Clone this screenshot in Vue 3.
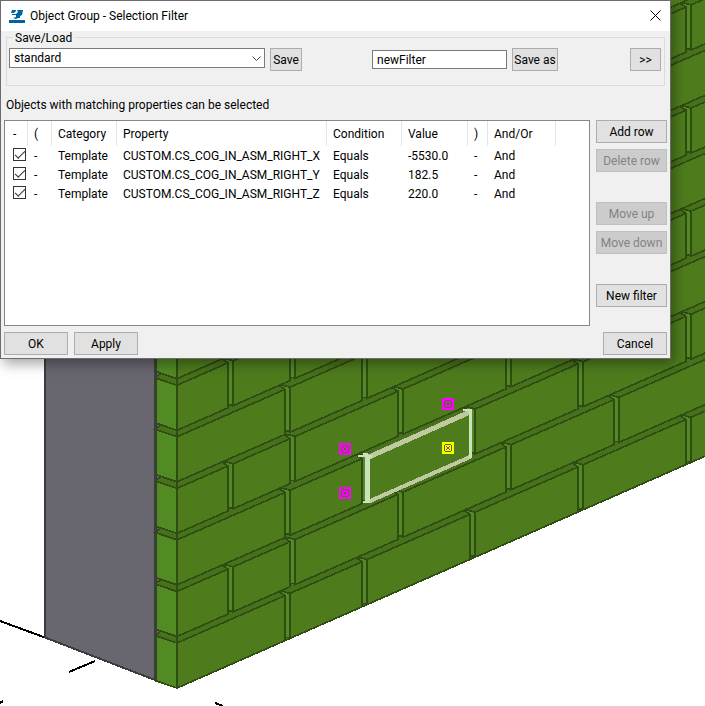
<script setup>
import { ref } from 'vue'

const preset = ref('standard')
const newName = ref('newFilter')
const rows = ref([
  { id: 'X', on: true, value: '-5530.0' },
  { id: 'Y', on: true, value: '182.5' },
  { id: 'Z', on: true, value: '220.0' },
])

/* Brick wall geometry: courses rise by PITCH, edges rise by SLOPE per pixel. */
const CORNER = 177
const SLOPE = 0.439
const PITCH = 51.55
const HEIGHT = 45
const evenBricks = [[177, 285], [290, 362], [367, 470], [475, 578], [583, 686], [691, 794]]
const oddBricks = [[177, 228], [233, 290], [295, 398], [403, 506], [511, 614], [619, 722]]

const base = (course, x) => 688 - course * PITCH - (x - CORNER) * SLOPE
const pts = (list) => list.map(([x, y]) => `${x},${y.toFixed(1)}`).join(' ')

const bricks = []
const joints = []
const sides = []
for (let c = 0; c < 14; c++) {
  const set = c % 2 ? oddBricks : evenBricks
  set.forEach(([a, b], i) => {
    bricks.push(pts([[a, base(c, a)], [a, base(c, a) - HEIGHT], [b, base(c, b) - HEIGHT], [b, base(c, b)]]))
    if (i > 0) {
      const l = a - 5
      const top = base(c, a) - HEIGHT
      joints.push({
        strip: pts([[l, base(c, a) - 1], [l, top + 2], [l - 5, top - 1], [l - 2, top - 2], [a, top], [a, base(c, a) - 1]]),
      })
    }
  })
  const y = 688 - c * PITCH
  sides.push({
    face: pts([[155, y - 7.5], [155, y - 52.5], [177, y - 45], [177, y]]),
    ledge: pts([[155, y - 52.5], [161, y - 57], [177, y - 51.5], [177, y - 45]]),
    gap: pts([[155, y - 59], [162, y - 56.5], [155, y - 52.5]]),
  })
}
const wall = pts([[177, 688], [177, -80], [720, -300], [720, base(0, 720)]])
const markers = [
  { x: 442, y: 398, color: '#ff00ff' },
  { x: 339, y: 443, color: '#ff00ff' },
  { x: 339, y: 487, color: '#ff00ff' },
  { x: 442, y: 442, color: '#ffff00' },
]
</script>

<template>
  <main class="viewport">
    <svg class="scene" viewBox="0 0 705 706" preserveAspectRatio="xMinYMin slice" aria-hidden="true">
      <g class="axes">
        <path d="M0 621L45 637.500M69 672L95 661M0 703L3 701M215 703L223 706" />
      </g>
      <polygon class="column" points="45,300 155,300 155,680 45,637.500" />
      <polygon class="ledge" :points="wall" />
      <g v-for="(s, i) in sides" :key="'s' + i">
        <polygon class="gap" :points="s.gap" />
        <polygon class="ledge" :points="s.ledge" />
        <polygon class="side" :points="s.face" />
      </g>
      <polygon v-for="(b, i) in bricks" :key="'b' + i" class="brick" :points="b" />
      <polygon v-for="(j, i) in joints" :key="'j' + i" class="side" :points="j.strip" />
      <path class="column-edge" d="M155.500 300V680" />
      <g class="picked">
        <path class="soft" stroke-width="5" d="M369 457L470 412" />
        <path class="soft" stroke-width="4" d="M369 501.500L470 457" />
        <path class="bright" stroke-width="3" d="M470.500 410V458" />
        <path class="bright" stroke-width="5" d="M367 455V503" />
        <path class="bright" stroke-width="2" d="M358 456L372 456M463 410L472 410M363 454L368 454M363 502L369 502" />
      </g>
      <g v-for="(m, i) in markers" :key="'m' + i" :transform="`translate(${m.x} ${m.y})`">
        <rect width="12" height="12" :fill="m.color" />
        <path class="marker-cut" d="M3 2h6v1h-6zM3 9h6v1h-6zM2 3h1v6h-1zM9 3h1v6h-1zM4 4h1v1h-1zM7 4h1v1h-1zM5 5h2v2h-2zM4 7h1v1h-1zM7 7h1v1h-1z" />
      </g>
    </svg>

    <form class="dialog" @submit.prevent>
      <header class="titlebar">
        <svg class="logo" viewBox="0 0 16 14" aria-hidden="true">
          <path fill="#0063a3" d="M0 11h16v3H0zM3 1h4v1L5 4H2zM8 1h6l-1 5-2 1v2H9l-2 1-3-1 3-1V6H3V5h4l2-2z" />
        </svg>
        <h1>Object Group - Selection Filter</h1>
        <button class="close" type="button" aria-label="Close">
          <svg viewBox="0 0 11 11"><path d="M.5.500l10 10M10.500.500l-10 10" /></svg>
        </button>
      </header>

      <fieldset class="saveload">
        <legend>Save/Load</legend>
        <div class="combo">
          <select v-model="preset" aria-label="Saved filter">
            <option>standard</option>
          </select>
          <svg viewBox="0 0 9 6" aria-hidden="true"><path d="M.5.500l4 4 4-4" /></svg>
        </div>
        <button class="btn save" type="button">Save</button>
        <input v-model="newName" class="name" type="text" aria-label="New filter name" />
        <button class="btn saveas" type="button">Save as</button>
        <button class="btn more" type="button">&gt;&gt;</button>
      </fieldset>

      <p class="hint">Objects with matching properties can be selected</p>

      <div class="body">
        <div class="list">
          <table>
            <colgroup>
              <col class="c1" /><col class="c2" /><col class="c3" /><col class="c4" />
              <col class="c5" /><col class="c6" /><col class="c7" /><col class="c8" /><col />
            </colgroup>
            <thead>
              <tr>
                <th class="tick">-</th><th>(</th><th>Category</th><th>Property</th><th>Condition</th>
                <th>Value</th><th>)</th><th>And/Or</th><th></th>
              </tr>
            </thead>
            <tbody>
              <tr v-for="r in rows" :key="r.id">
                <td class="tick"><input v-model="r.on" type="checkbox" :aria-label="'Use row ' + r.id" /></td>
                <td>-</td>
                <td>Template</td>
                <td>CUSTOM.CS_COG_IN_ASM_RIGHT_{{ r.id }}</td>
                <td>Equals</td>
                <td>{{ r.value }}</td>
                <td>-</td>
                <td>And</td>
                <td></td>
              </tr>
            </tbody>
          </table>
        </div>
        <div class="actions">
          <button class="btn" type="button">Add row</button>
          <button class="btn" type="button" disabled>Delete row</button>
          <button class="btn gap-above" type="button" disabled>Move up</button>
          <button class="btn" type="button" disabled>Move down</button>
          <button class="btn gap-above" type="button">New filter</button>
        </div>
      </div>

      <footer class="footer">
        <button class="btn wide" type="submit">OK</button>
        <button class="btn wide" type="button">Apply</button>
        <button class="btn wide cancel" type="button">Cancel</button>
      </footer>
    </form>
  </main>
</template>

<style>
body {
  background: #fff;
}
</style>

<style scoped>
* {
  box-sizing: border-box;
}
.viewport {
  position: relative;
  min-height: 100vh;
  overflow: hidden;
  font-family: "Segoe UI", Roboto, sans-serif;
  font-size: 12px;
  line-height: 16px;
  color: #000;
}
.scene {
  position: absolute;
  inset: 0;
  width: 100%;
  height: 100%;
  shape-rendering: crispEdges;
}
.axes path {
  stroke: #000;
  stroke-width: 2;
}
.column {
  fill: #68666f;
  stroke: #3c3c40;
  stroke-width: 2;
}
.column-edge {
  stroke: #3c3c40;
  stroke-width: 2;
}
.gap {
  fill: #68666f;
  stroke: #2f4c12;
}
.ledge {
  fill: #47711a;
  stroke: #2f4c12;
  stroke-width: 1.7;
}
.brick {
  fill: #4e7c1d;
  stroke: #2f4c12;
  stroke-width: 1.7;
}
.side {
  fill: #528a24;
  stroke: #2f4c12;
  stroke-width: 1.7;
}
.picked path {
  fill: none;
}
.picked .soft {
  stroke: #c0caa2;
}
.picked .bright {
  stroke: #cce2ba;
}
.marker-cut {
  fill: #4e6a1d;
}
.dialog {
  position: relative;
  display: flex;
  flex-direction: column;
  margin: 0 34px 0 0;
  padding-bottom: 3px;
  border: 1px solid #6d6b70;
  background: #f0f0f0;
  box-shadow: 3px 5px 12px rgba(0, 0, 0, 0.35);
}
.titlebar {
  display: flex;
  align-items: center;
  height: 30px;
  padding: 0 9px 0 8px;
  background: #fff;
}
.logo {
  width: 16px;
  height: 14px;
}
h1 {
  flex: 1;
  margin: 0 0 0 5px;
  font-size: 12px;
  font-weight: 400;
}
.close {
  display: flex;
  padding: 0 0 2px;
  border: 0;
  background: none;
}
.close svg {
  width: 11px;
  height: 11px;
  fill: none;
  stroke: #000;
}
.saveload {
  display: flex;
  align-items: flex-start;
  min-width: 0;
  height: 55px;
  margin: 0 5px;
  padding: 4px 3px 0 2px;
  border: 1px solid #dcdcdc;
}
legend {
  height: 13px;
  margin-left: 4px;
  padding: 0 2px;
  line-height: 15px;
}
.combo {
  position: relative;
  flex: 0 1 256px;
}
.combo select {
  display: block;
  width: 100%;
  height: 20px;
  padding: 0 20px 0 4px;
  border: 1px solid #7a7a7a;
  border-radius: 0;
  background: #fff;
  font: inherit;
  color: inherit;
  appearance: none;
}
.combo svg {
  position: absolute;
  right: 4px;
  top: 8px;
  width: 9px;
  height: 6px;
  fill: none;
  stroke: #444;
  pointer-events: none;
}
.btn {
  height: 23px;
  padding: 0;
  border: 1px solid #adadad;
  background: #e1e1e1;
  font: inherit;
  color: inherit;
  white-space: nowrap;
}
.btn:disabled {
  border-color: #bfbfbf;
  background: #ccc;
  color: #838383;
}
.save {
  width: 32px;
  margin-left: 5px;
}
.name {
  width: 135px;
  height: 19px;
  margin: 2px 5px 0 auto;
  padding: 0 4px;
  border: 1px solid #7a7a7a;
  background: #fff;
  font: inherit;
  color: inherit;
}
.saveas {
  width: 46px;
}
.more {
  width: 31px;
  margin-left: 72px;
}
.hint {
  margin: 11px 5px 7px;
}
.body {
  display: flex;
  gap: 6px;
  padding: 0 3px;
}
.list {
  flex: 1;
  min-height: 206px;
  border: 1px solid #828790;
  background: #fff;
}
table {
  width: 100%;
  table-layout: fixed;
  border-collapse: separate;
  border-spacing: 0;
}
.c1 { width: 23px; }
.c2 { width: 24px; }
.c3 { width: 65px; }
.c4 { width: 210px; }
.c5 { width: 75px; }
.c6 { width: 66px; }
.c7 { width: 20px; }
.c8 { width: 68px; }
th,
td {
  height: 19px;
  padding: 0 0 0 6px;
  font-weight: 400;
  text-align: left;
  white-space: nowrap;
}
th {
  height: 25px;
  border-right: 1px solid #e5e5e5;
}
th:last-child {
  border-right: 0;
}
.tick {
  padding-left: 8px;
}
.tick input {
  display: block;
  width: 13px;
  height: 13px;
  margin: 0 0 2px;
  border: 1px solid #333;
  background: #fff;
  appearance: none;
}
.tick input:checked::after {
  content: "";
  display: block;
  width: 9px;
  height: 4px;
  margin: 2px 0 0 1px;
  border: solid #333;
  border-width: 0 0 1px 1px;
  transform: rotate(-45deg);
}
.actions {
  display: flex;
  flex-direction: column;
  gap: 6px;
  width: 71px;
}
.gap-above {
  margin-top: 24px;
}
.footer {
  display: flex;
  gap: 6px;
  padding: 6px 3px 0;
}
.wide {
  width: 64px;
}
.cancel {
  margin-left: auto;
}
</style>
